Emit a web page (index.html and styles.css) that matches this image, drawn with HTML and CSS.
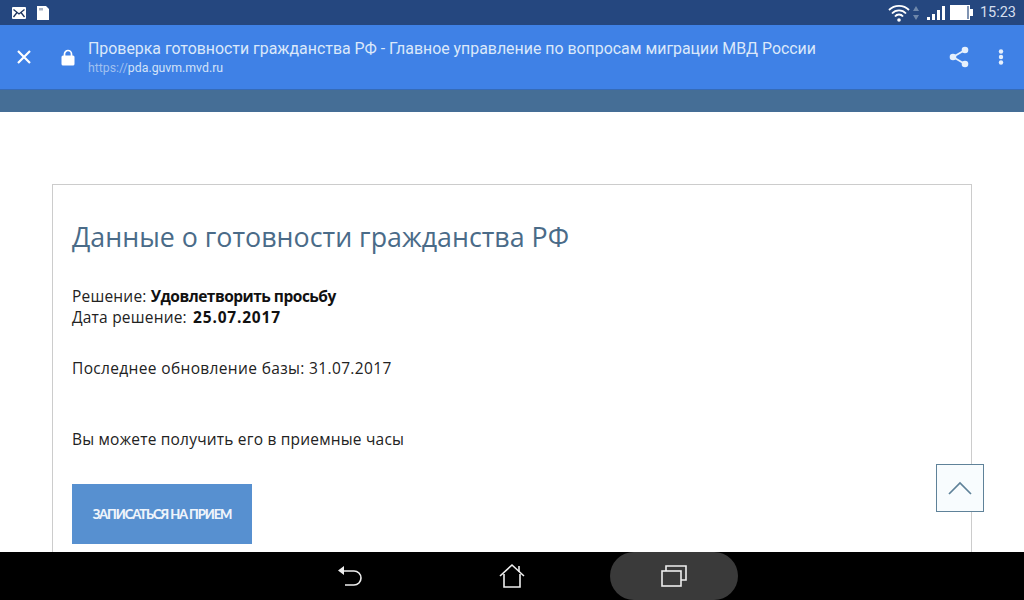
FILE: index.html
```html
<!DOCTYPE html>
<html lang="ru">
<head>
    <meta charset="UTF-8">
    <meta name="viewport" content="width=device-width, initial-scale=1.0">
    <title>Проверка готовности гражданства РФ</title>
    <link rel="stylesheet" href="styles.css">
</head>
<body>
    <div class="status-bar">
        <div class="status-left">
            <svg width="14" height="12" viewBox="0 0 14 12"><rect width="14" height="12" rx="1" fill="#fff"/><path d="M1.5 2.5 7 7l5.5-4.5M1.5 10 5 5.5M12.5 10 9 5.5" fill="none" stroke="#1d3560" stroke-width="1.3"/></svg>
            <svg width="12" height="14" viewBox="0 0 12 14"><path d="M0 0h9l3 3v11H0z" fill="#fff"/><path d="M2 2h4v2.5H2z" fill="#aab4c4"/></svg>
        </div>
        <div class="status-right">
            <svg width="22" height="20" viewBox="0 0 22 20" fill="none" stroke="#fff" stroke-width="1.8"><path d="M1 7a14 14 0 0 1 20 0M4 10.5a9.5 9.5 0 0 1 14 0M7 13.5a5 5 0 0 1 8 0"/><circle cx="11" cy="17" r="1.8" fill="#fff" stroke="none"/></svg>
            <svg class="wifi-arrows" width="6" height="14" viewBox="0 0 6 14"><path d="M3 0l3 5H0zM3 14l3-5H0z" fill="#6f88ab"/></svg>
            <svg class="signal" width="18" height="14" viewBox="0 0 18 14" fill="#fff"><rect x="0" y="11" width="3" height="3"/><rect x="5" y="8" width="3" height="6"/><rect x="10" y="4" width="3" height="10"/><rect x="15" y="0" width="3" height="14"/></svg>
            <svg class="battery" width="23" height="15" viewBox="0 0 23 15"><rect width="20" height="15" fill="#fff"/><rect x="20" y="4" width="3" height="7" fill="#fff"/><rect x="17" y="1" width="2" height="13" fill="#7f93b2"/></svg>
            <span class="clock">15:23</span>
        </div>
    </div>

    <header class="app-bar">
        <svg class="close-icon" width="16" height="16" viewBox="0 0 16 16"><path d="M2 2l12 12M14 2 2 14" stroke="#fff" stroke-width="2.2" fill="none"/></svg>
        <svg class="lock-icon" width="14" height="17" viewBox="0 0 14 17"><path d="M3.5 7V5a3.5 3.5 0 0 1 7 0v2" fill="none" stroke="#fff" stroke-width="1.7"/><rect x="0.5" y="6.5" width="13" height="10" rx="1.5" fill="#fff"/></svg>
        <div class="page-info">
            <div class="page-title">Проверка готовности гражданства РФ - Главное управление по вопросам миграции МВД России</div>
            <div class="page-url"><span class="scheme">https://</span>pda.guvm.mvd.ru</div>
        </div>
        <svg class="share-icon" width="20" height="22" viewBox="0 0 20 22"><path d="M16 4 4 11l12 7" fill="none" stroke="#e6f0fc" stroke-width="1.8"/><circle cx="16" cy="4" r="3.3" fill="#e6f0fc"/><circle cx="4" cy="11" r="3.3" fill="#e6f0fc"/><circle cx="16" cy="18" r="3.3" fill="#e6f0fc"/></svg>
        <svg class="menu-icon" width="6" height="16" viewBox="0 0 6 16" fill="#e6f0fc"><circle cx="3" cy="2.5" r="2.2"/><circle cx="3" cy="8" r="2.2"/><circle cx="3" cy="13.5" r="2.2"/></svg>
    </header>

    <div class="site-strip"></div>

    <main class="content">
        <section class="card">
            <h1>Данные о готовности гражданства РФ</h1>
            <p class="result">Решение: <b class="verdict">Удовлетворить просьбу</b><br>Дата решение: <b class="date">25.07.2017</b></p>
            <p class="updated">Последнее обновление базы: 31.07.2017</p>
            <p class="hours">Вы можете получить его в приемные часы</p>
            <a class="btn" href="#">ЗАПИСАТЬСЯ НА ПРИЕМ</a>
        </section>
    </main>

    <a class="to-top" href="#">
        <svg width="26" height="14" viewBox="0 0 26 14"><path d="M2 13 13 2l11 11" fill="none" stroke="#5f8299" stroke-width="1.7"/></svg>
    </a>

    <nav class="nav-bar">
        <div class="nav-slot">
            <svg width="26" height="24" viewBox="0 0 26 24" fill="none" stroke="#eee" stroke-width="1.6"><path d="M4 7h13a6.5 6.5 0 0 1 0 14H8"/><path d="M7 2v9L1 6.5z" fill="#eee" stroke="none"/></svg>
        </div>
        <div class="nav-slot">
            <svg width="26" height="26" viewBox="0 0 26 26" fill="none" stroke="#eee" stroke-width="1.6"><path d="M1 13 13 2l12 11"/><path d="M5 11v13h16V11"/><path d="M20 3v6"/></svg>
        </div>
        <div class="nav-slot active">
            <svg width="26" height="24" viewBox="0 0 26 24" fill="none" stroke="#eee" stroke-width="1.6"><rect x="1" y="7" width="19" height="15"/><path d="M5 7V2h20v14h-5"/></svg>
        </div>
    </nav>
</body>
</html>
```

FILE: styles.css
```css
:root {
    --bar-blue: #3f81e6;
    --heading: #4a6b88;
    --button: #5790d0;
}

html, body {
    height: 100%;
}

body {
    margin: 0;
    width: 1024px;
    height: 600px;
    overflow: hidden;
    display: flex;
    flex-direction: column;
    background: #fff;
    font-family: "Open Sans", Arial, sans-serif;
    color: #222;
}

.status-bar {
    height: 25px;
    flex: none;
    display: flex;
    justify-content: space-between;
    align-items: center;
    padding: 0 8px 0 12px;
    background: #25477f;
}

.status-left, .status-right {
    display: flex;
    align-items: center;
}

.status-left {
    gap: 11px;
}

.wifi-arrows {
    margin-left: 3px;
}

.signal {
    margin-left: 8px;
}

.battery {
    margin-left: 5px;
}

.clock {
    margin-left: 7px;
    font-family: Roboto, Arial, sans-serif;
    font-size: 14.5px;
    color: #d5dfee;
}

.app-bar {
    height: 65px;
    flex: none;
    display: flex;
    align-items: center;
    background: var(--bar-blue);
    border-bottom: 1px solid #356bb9;
    box-sizing: border-box;
    font-family: Roboto, Arial, sans-serif;
}

.close-icon {
    margin-left: 16px;
    flex: none;
}

.lock-icon {
    margin-left: 29px;
    flex: none;
}

.page-info {
    margin-left: 13px;
    flex: 1;
    padding-top: 1px;
}

.page-title {
    font-size: 15.9px;
    line-height: 20px;
    color: #dbe8fa;
    white-space: nowrap;
}

.page-url {
    margin-top: 1px;
    font-size: 12.3px;
    line-height: 16px;
    color: #d3e2f8;
}

.scheme {
    color: #9fc0f0;
}

.share-icon {
    flex: none;
    margin-right: 29px;
}

.menu-icon {
    flex: none;
    margin-right: 20px;
}

.site-strip {
    height: 22px;
    flex: none;
    background: #456e96;
}

.content {
    flex: 1;
    min-height: 0;
    overflow: hidden;
    padding: 72px 52px 0;
}

.card {
    height: 500px;
    border: 1px solid #ccc;
    padding: 0 19px;
}

h1 {
    margin: 32px 0 0;
    font-size: 26.8px;
    line-height: 40px;
    font-weight: 400;
    color: var(--heading);
}

.result, .updated, .hours {
    margin: 0;
    font-size: 15.5px;
    line-height: 21px;
    letter-spacing: 0.2px;
}

.result {
    margin-top: 29px;
}

.result b {
    font-weight: 700;
    color: #111;
}

.verdict {
    letter-spacing: -0.5px;
}

.date {
    margin-left: 2px;
    letter-spacing: 0.8px;
}

.updated {
    margin-top: 30px;
    letter-spacing: 0.35px;
}

.hours {
    margin-top: 50px;
}

.btn {
    display: flex;
    justify-content: center;
    align-items: center;
    width: 180px;
    height: 60px;
    margin-top: 34px;
    background: var(--button);
    color: #eef4fb;
    font-family: Lato, Arial, sans-serif;
    font-size: 13px;
    font-weight: 900;
    letter-spacing: -1.1px;
    text-decoration: none;
}

.to-top {
    position: absolute;
    left: 936px;
    top: 464px;
    width: 48px;
    height: 48px;
    box-sizing: border-box;
    border: 1px solid #5f8299;
    background: #f8fcfe;
    display: flex;
    justify-content: center;
    align-items: center;
}

.nav-bar {
    height: 48px;
    flex: none;
    display: flex;
    align-items: center;
    padding-left: 286px;
    background: #000;
}

.nav-slot {
    width: 128px;
    height: 48px;
    margin-right: 34px;
    flex: none;
    display: flex;
    justify-content: center;
    align-items: center;
}

.nav-slot.active {
    background: #3a3a3a;
    border-radius: 24px;
}
```
